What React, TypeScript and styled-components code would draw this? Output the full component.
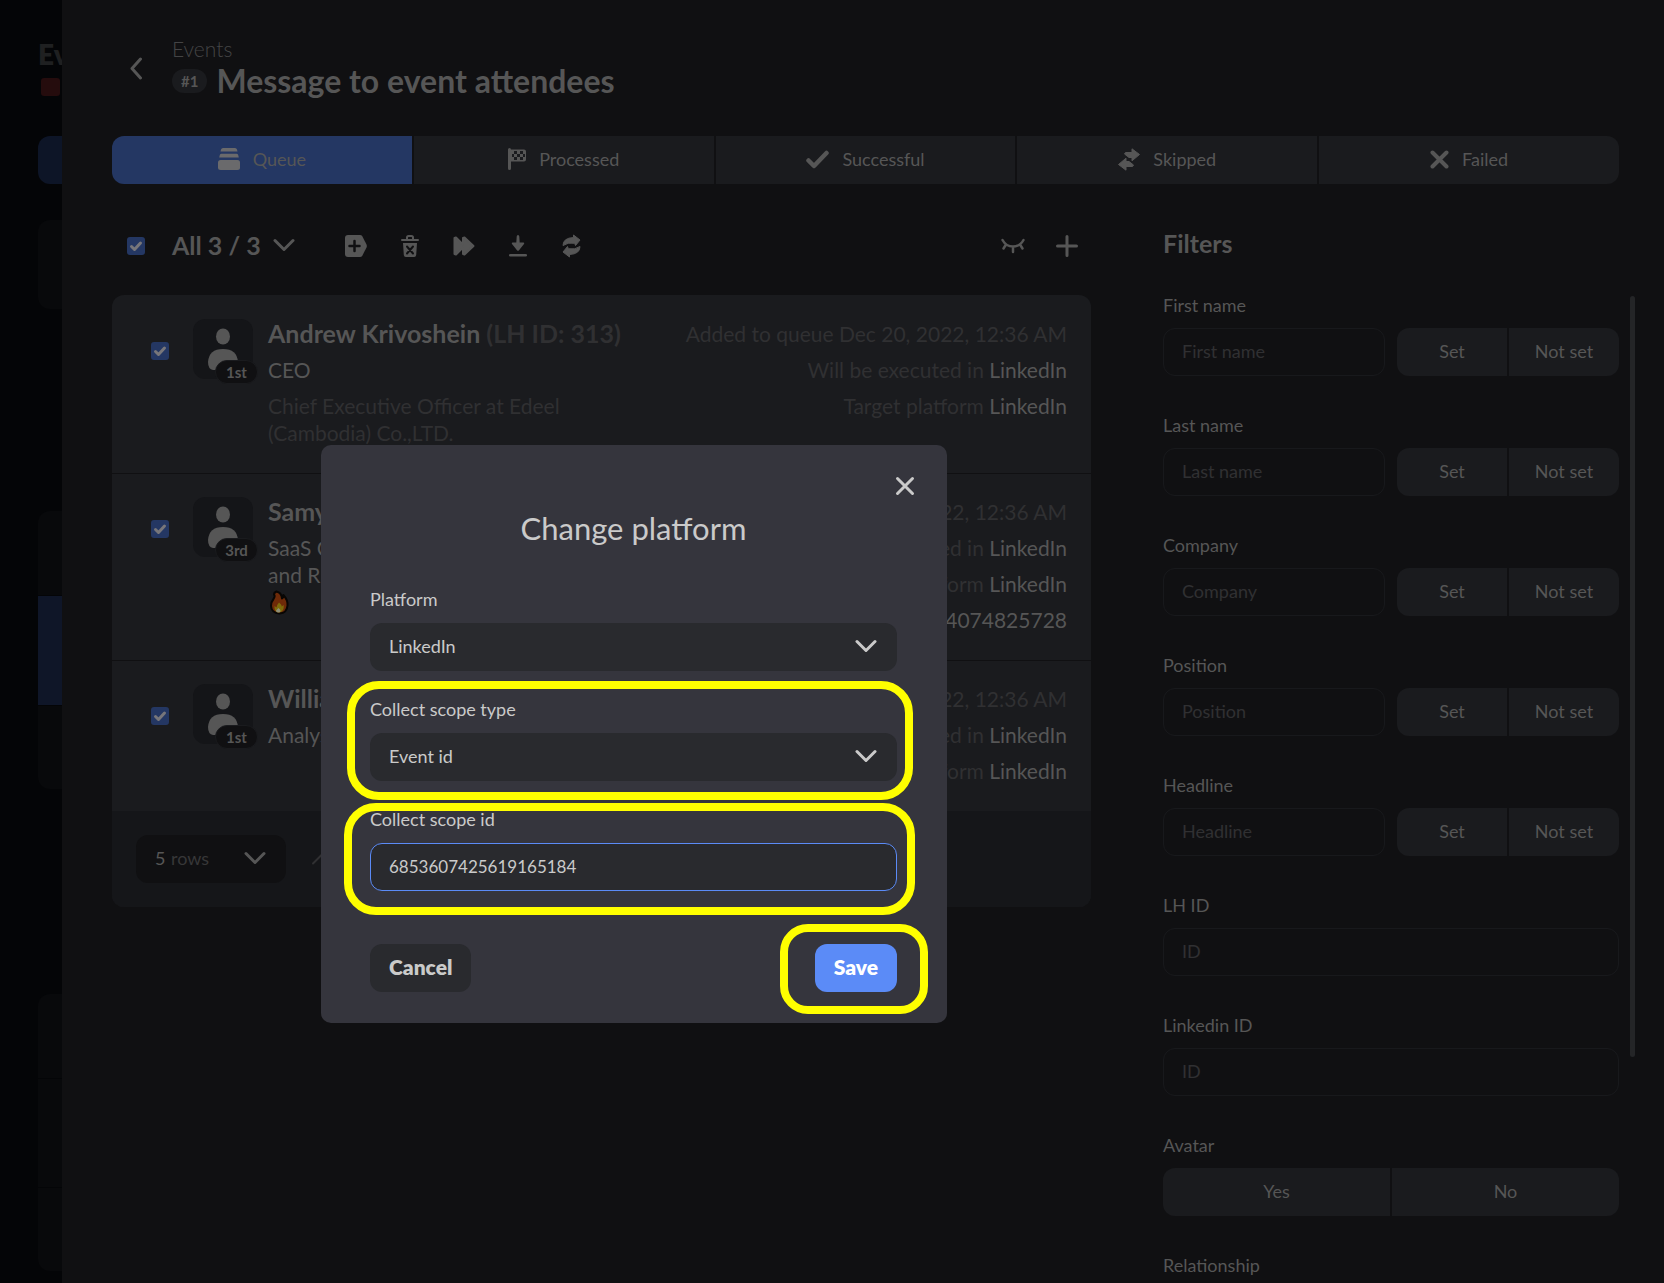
import React from "react";
import styled, { createGlobalStyle, css } from "styled-components";

const GlobalStyle = createGlobalStyle`
  *, *::before, *::after { box-sizing: border-box; }
  body { margin: 0; background: #040507; }
  body, button, input, select { font-family: Lato, "Open Sans", sans-serif; }
  h1, h2, p { margin: 0; font-weight: 400; }
  button, input, select { margin: 0; padding: 0; border: 0; background: none; color: inherit; font-size: 18px; line-height: 24px; }
`;

const c = {
  page: "#040507",
  drawer: "#101012",
  card: "#1a1b1e",
  footer: "#151619",
  text: "#565656",
  dim: "#303032",
  accentDim: "#243763",
  modal: "#35353d",
  control: "#292a2e",
  light: "#cacaca",
  accent: "#5b8bf7",
  mark: "#ffff00",
};

const Page = styled.div`
  display: grid;
  grid-template-columns: 62px minmax(0, 1fr);
  position: relative;
  min-height: 100vh;
  overflow: hidden;
  background: ${c.page};
  color: ${c.text};
`;

/* ---------- screen under the drawer ---------- */

const Backdrop = styled.aside`
  display: flex;
  flex-direction: column;
  overflow: hidden;
  padding: 38px 0 0 38px;
`;

const BackTitle = styled.div`
  font-size: 28px;
  line-height: 32px;
  font-weight: 800;
  color: #1f2021;
`;

const BackBadge = styled.div`
  width: 19px;
  height: 18px;
  margin: 8px 0 40px 3px;
  border-radius: 3px;
  background: #250c0d;
`;

const BackTab = styled.div`
  height: 48px;
  margin-bottom: 36px;
  border-radius: 12px 0 0 12px;
  background: #0d1527;
`;

const BackCard = styled.div<{ $gap: number }>`
  margin-bottom: ${(p) => p.$gap}px;
  border-radius: 12px 0 0 12px;
  overflow: hidden;
  background: #08090b;
`;

const BackRow = styled.div<{ $h: number; $active?: boolean }>`
  height: ${(p) => p.$h}px;
  background: ${(p) => (p.$active ? "#0f1628" : "transparent")};
  & + & { border-top: 1px solid ${c.page}; }
`;

/* ---------- drawer ---------- */

const Drawer = styled.main`
  padding: 35px 45px 0 50px;
  background: ${c.drawer};
`;

const Header = styled.header`
  display: flex;
  align-items: center;
  gap: 24px;
  margin-bottom: 37px;
`;

const IconButton = styled.button`
  display: grid;
  place-items: center;
  width: 24px;
  height: 24px;
`;

const BackButton = styled(IconButton)`
  margin-left: 12px;
  height: 64px;
`;

const Crumb = styled.a`
  display: block;
  font-size: 21px;
  line-height: 28px;
  font-weight: 300;
  color: #444445;
  text-decoration: none;
`;

const TitleLine = styled.div`
  display: flex;
  align-items: center;
  gap: 9px;
`;

const NumberChip = styled.span`
  padding: 0 9px;
  border-radius: 12px;
  background: ${c.card};
  font-size: 15px;
  line-height: 24px;
  font-weight: 700;
`;

const Title = styled.h1`
  font-size: 32px;
  line-height: 36px;
  font-weight: 700;
`;

const Segmented = styled.div`
  display: flex;
  gap: 2px;
  min-width: 0;
`;

const Segment = styled.button<{ $active?: boolean }>`
  display: flex;
  flex: 1 1 0;
  align-items: center;
  justify-content: center;
  gap: 13px;
  height: 48px;
  padding-bottom: 2px;
  background: ${(p) => (p.$active ? c.accentDim : c.card)};
  &:first-child { border-radius: 12px 0 0 12px; }
  &:last-child { border-radius: 0 12px 12px 0; }
`;

const Body = styled.div`
  display: grid;
  grid-template-columns: minmax(0, 1fr) 456px;
  gap: 72px;
  align-items: start;
  margin-top: 43px;
`;

const Toolbar = styled.div`
  display: flex;
  align-items: center;
  height: 38px;
  margin-bottom: 30px;
  padding: 0 12px 0 15px;
`;

const AllButton = styled.button`
  display: flex;
  align-items: center;
  gap: 12px;
  margin: 0 49px 0 27px;
  padding-bottom: 2px;
  font-size: 25px;
  line-height: 32px;
  font-weight: 700;
`;

const Actions = styled.div<{ $end?: boolean }>`
  display: flex;
  gap: 30px;
  ${(p) => p.$end && css`margin-left: auto;`}
`;

const CheckWrap = styled.span`
  display: grid;
  width: 18px;
  height: 18px;
  & > * { grid-area: 1 / 1; }
`;

const CheckBox = styled.input`
  appearance: none;
  width: 18px;
  height: 18px;
  border-radius: 3px;
  background: ${c.accentDim};
`;

const CheckMark = styled.svg`
  pointer-events: none;
`;

/* ---------- people ---------- */

const Card = styled.section`
  padding-top: 1px;
  border-radius: 12px;
  overflow: hidden;
  background: ${c.card};
`;

const PersonRow = styled.article`
  display: grid;
  grid-template-columns: 18px 60px minmax(0, 1fr) auto;
  align-items: start;
  padding: 23px 24px 27px 39px;
  & + & { border-top: 1px solid ${c.drawer}; }
`;

const RowCheck = styled.div`
  padding-top: 23px;
`;

const AvatarBox = styled.div`
  position: relative;
  display: grid;
  place-items: center;
  width: 60px;
  height: 60px;
  margin-left: 24px;
  border-radius: 12px;
  background: #141518;
`;

const Degree = styled.span`
  position: absolute;
  right: -5px;
  bottom: -5px;
  width: 43px;
  border: 1px solid ${c.card};
  border-radius: 12px;
  background: ${c.drawer};
  font-size: 15px;
  line-height: 22px;
  font-weight: 700;
  text-align: center;
`;

const Info = styled.div`
  display: grid;
  gap: 9px;
  max-width: 384px;
  padding: 1px 0 0 39px;
  font-size: 21px;
  line-height: 27px;
`;

const Name = styled.h2`
  font-size: 25px;
  line-height: 27px;
  font-weight: 700;
  white-space: nowrap;
`;

const Dim = styled.span`
  color: ${c.dim};
`;

const Meta = styled.div`
  display: grid;
  gap: 9px;
  padding-top: 1px;
  font-size: 21px;
  line-height: 27px;
  text-align: right;
`;

const CardFooter = styled.footer`
  display: flex;
  align-items: center;
  gap: 24px;
  padding: 24px;
  background: ${c.footer};
`;

const RowsField = styled.label`
  position: relative;
  width: 150px;
  border-radius: 12px;
  background: ${c.drawer};
`;

const RowsSelect = styled.select`
  appearance: none;
  display: block;
  width: 100%;
  height: 48px;
  padding: 0 0 2px 19px;
`;

const RowsUnit = styled.span`
  position: absolute;
  left: 35px;
  top: 11px;
  font-size: 18px;
  line-height: 24px;
  color: #373738;
  pointer-events: none;
`;

const SelectArrow = styled.span`
  position: absolute;
  right: 20px;
  top: 11px;
  display: grid;
  place-items: center;
  height: 24px;
  pointer-events: none;
`;

/* ---------- filters ---------- */

const Filters = styled.aside`
  position: relative;
  font-size: 18px;
  line-height: 24px;
`;

const FiltersTitle = styled.h2`
  margin-bottom: 34px;
  font-size: 25px;
  line-height: 32px;
  font-weight: 700;
`;

const FilterList = styled.div`
  display: grid;
  gap: 37px;
`;

const FilterField = styled.div`
  display: grid;
  gap: 11px;
`;

const FilterRow = styled.div`
  display: grid;
  grid-template-columns: 1fr 1fr;
  gap: 12px;
`;

const FilterInput = styled.input`
  min-width: 0;
  height: 48px;
  padding: 0 18px 2px;
  border: 1px solid #18191c;
  border-radius: 12px;
  &::placeholder { color: ${c.dim}; opacity: 1; }
`;

const ScrollThumb = styled.div`
  position: absolute;
  right: -16px;
  top: 69px;
  width: 5px;
  height: 761px;
  border-radius: 3px;
  background: #242527;
`;

/* ---------- dialog ---------- */

const Dialog = styled.div`
  position: absolute;
  left: 321px;
  top: 445px;
  width: 626px;
  padding: 29px 50px 31px 49px;
  border-radius: 10px;
  background: ${c.modal};
  color: ${c.light};
  font-size: 18px;
  line-height: 24px;
`;

const DialogTop = styled.div`
  display: flex;
  justify-content: flex-end;
  margin: 0 -20px 10px 0;
`;

const DialogTitle = styled.h2`
  margin-bottom: 39px;
  font-size: 31px;
  line-height: 40px;
  text-align: center;
`;

const DialogFields = styled.div`
  display: grid;
  gap: 26px;
  margin-bottom: 53px;
`;

const DialogField = styled.div`
  position: relative;
  display: grid;
  gap: 12px;
`;

const ControlWrap = styled.div`
  position: relative;
`;

const controlStyle = css`
  appearance: none;
  display: block;
  width: 100%;
  height: 48px;
  padding: 0 18px 2px;
  border: 1px solid transparent;
  border-radius: 12px;
  background: ${c.control};
`;

const DialogSelect = styled.select`
  ${controlStyle}
`;

const DialogInput = styled.input`
  ${controlStyle}
  border-color: ${c.accent};
  font-size: 17px;
  outline: none;
`;

const DialogActions = styled.div`
  display: flex;
  justify-content: space-between;
`;

const ActionWrap = styled.div`
  position: relative;
`;

const ActionButton = styled.button<{ $primary?: boolean }>`
  height: 48px;
  padding: 0 19px 2px;
  border-radius: 12px;
  background: ${(p) => (p.$primary ? c.accent : c.control)};
  color: ${(p) => (p.$primary ? "#ffffff" : c.light)};
  font-size: 21px;
  font-weight: 800;
`;

const Highlight = styled.span<{ $inset: string; $radius: number }>`
  position: absolute;
  inset: ${(p) => p.$inset};
  border: 8px solid ${c.mark};
  border-radius: ${(p) => p.$radius}px;
  pointer-events: none;
`;

/* ---------- icons ---------- */

const Chevron = ({ w = 22, dir = "down", stroke = 3 }: { w?: number; dir?: "down" | "up"; stroke?: number }) => (
  <svg width={w} height="14" viewBox="0 0 22 14" fill="none" stroke="currentColor" strokeWidth={stroke} strokeLinecap="round" strokeLinejoin="round">
    <path d={dir === "down" ? "M2 2.5l9 9 9-9" : "M2 11.500l9-9 9 9"} />
  </svg>
);

const BackIcon = () => (
  <svg width="14" height="26" viewBox="0 0 14 26" fill="none" stroke="currentColor" strokeWidth="3" strokeLinecap="round" strokeLinejoin="round">
    <path d="M11.500 5L3 14.500l8.500 9.500" />
  </svg>
);

const QueueIcon = () => (
  <svg width="22" height="22" viewBox="0 0 22 22" fill="#6a6a6c">
    <path d="M5 0h12q1.500 0 2 1.600l.5 1.900H2.500L3 1.600Q3.500 0 5 0zM3.500 5.700h15q1.300 0 1.700 1.300l.6 2.500H1.200L1.800 7q.4-1.300 1.700-1.300z" />
    <rect y="12" width="22" height="10" rx="2.500" />
  </svg>
);

const FlagIcon = () => (
  <svg width="18" height="22" viewBox="0 0 18 22">
    <path fill="currentColor" d="M1.500 0Q3 0 3 1.500h13q2 0 2 2v8q0 2-2 2H3v7Q3 22 1.500 22T0 20.500v-19Q0 0 1.500 0z" />
    <path fill={c.card} d="M6 3h3v3H6zM12 3h3v3h-3zM9 6h3v3H9zM15 6h2v3h-2zM4 6h2v3H4zM6 9h3v3H6zM12 9h3v3h-3z" />
  </svg>
);

const CheckIcon = () => (
  <svg width="23" height="19" viewBox="0 0 23 19" fill="none" stroke="currentColor" strokeWidth="4.500" strokeLinecap="round" strokeLinejoin="round">
    <path d="M2.500 10.500l5.500 5.500L20.500 3" />
  </svg>
);

const SkipIcon = () => (
  <svg width="22" height="23" viewBox="0 0 22 23" fill="currentColor" stroke="currentColor" strokeWidth="1" strokeLinejoin="round">
    <path d="M7.500 4.500h6.500V.8l7.500 5.700-7.500 6.300V9.500H11L6.500 6z" />
    <path d="M14.500 18.500H8v3.700L.5 16.500 8 10.200v3.300h3L15.500 17z" />
  </svg>
);

const FailIcon = () => (
  <svg width="19" height="19" viewBox="0 0 19 19" stroke="currentColor" strokeWidth="4" strokeLinecap="round">
    <path d="M2.500 2.500l14 14M16.500 2.500l-14 14" />
  </svg>
);

const TagPlusIcon = () => (
  <svg width="22" height="22" viewBox="0 0 22 22">
    <path fill="currentColor" d="M3 0h12q1.500 0 2.300 1.200l4.200 8.300q.7 1.500 0 3l-4.200 8.300Q16.500 22 15 22H3q-3 0-3-3V3q0-3 3-3z" />
    <path d="M9.500 6v10M4.500 11h10" stroke={c.drawer} strokeWidth="2.500" strokeLinecap="round" />
  </svg>
);

const TrashIcon = () => (
  <svg width="18" height="22" viewBox="0 0 18 22">
    <path fill="none" stroke="currentColor" strokeWidth="2" d="M6 4V2.500Q6 1 7.500 1h3Q12 1 12 2.500V4" />
    <path fill="currentColor" d="M1 4h16q1 0 1 1t-1 1H1Q0 6 0 5t1-1zM2 8h14l-.8 12q-.2 2-2 2H4.800q-1.800 0-2-2z" />
    <path d="M6 11.500l6 7M12 11.500l-6 7" stroke={c.drawer} strokeWidth="2" strokeLinecap="round" />
  </svg>
);

const ForwardIcon = () => (
  <svg width="22" height="20" viewBox="0 0 22 20" fill="currentColor" stroke="currentColor" strokeWidth="2" strokeLinejoin="round">
    <path d="M1.500 2l1.500-.5 7 7V2l1.500-.5L20.500 10l-9 8.500L10 18v-6.500l-7 7-1.500-.5z" />
  </svg>
);

const DownloadIcon = () => (
  <svg width="18" height="22" viewBox="0 0 18 22" fill="currentColor">
    <path d="M9 0q1.200 0 1.300 1.500L10.700 7.500h3.800q1.300.3.500 1.500l-5 6.200q-1 1-2 0L3 9q-.8-1.200.5-1.500h3.800L7.700 1.500Q7.800 0 9 0z" />
    <rect y="19" width="18" height="2.600" rx="1.300" />
  </svg>
);

const RefreshIcon = () => (
  <svg width="19" height="24" viewBox="0 0 19 24" fill="currentColor" stroke="currentColor" strokeWidth="1" strokeLinejoin="round">
    <path d="M1 11.500Q1 4 11.500 3.500V1l6.500 5-4.500 5.500-.8-2.200Q6 8 1 11.500z" />
    <path d="M18 12.500q0 7.500-10.500 8V23L1 18l4.500-5.500.8 2.200Q13 16 18 12.500z" />
  </svg>
);

const HiddenIcon = () => (
  <svg width="24" height="16" viewBox="0 0 24 16" fill="none" stroke="currentColor" strokeWidth="2.500" strokeLinecap="round">
    <path d="M1.500 2Q5 8.500 12 8.500T22.500 2M12 9v5M5 6.500l-2.500 4M19 6.500l2.500 4" />
  </svg>
);

const PlusIcon = () => (
  <svg width="22" height="22" viewBox="0 0 22 22" stroke="currentColor" strokeWidth="3" strokeLinecap="round">
    <path d="M11 1.500v19M1.500 11h19" />
  </svg>
);

const CloseIcon = () => (
  <svg width="20" height="20" viewBox="0 0 20 20" stroke="currentColor" strokeWidth="3" strokeLinecap="round">
    <path d="M2.500 2.500l15 15M17.500 2.500l-15 15" />
  </svg>
);

const PersonIcon = () => (
  <svg width="30" height="42" viewBox="0 0 30 42" fill="currentColor">
    <ellipse cx="15" cy="8.500" rx="7" ry="8" />
    <path d="M0 34Q1 21 15 21t15 13q0 7-5 8H5q-5-1-5-8z" />
  </svg>
);

const FireSvg = styled.svg`
  display: block;
  margin-top: 2px;
`;

const FireIcon = () => (
  <FireSvg width="22" height="25" viewBox="0 0 22 25" role="img" aria-label="fire">
    <path d="M8.500 1.500q5 1 5.500 7 1.500-1 1.300-3.500Q20 10 19.500 15.500 19 23 11.500 23.500 3.500 23 3 16q0-4 2.500-7Q7.500 6 6 4.500q0-2 2.500-3z" fill="#6e2a08" stroke="#080604" strokeWidth="2" strokeLinejoin="round" />
    <path d="M11 12.500q3 2.500 2.700 4l2-1.500q.8 7-4.700 7.500-5-.5-4.500-6.500l2 1.500q.5-3 2.500-5z" fill="#7d6a0a" />
    <path d="M10.500 18q2 1.500 2 3t-2.500 1.500q-2 0-2-2z" fill="#8f8f78" />
  </FireSvg>
);

/* ---------- parts ---------- */

const Check = ({ label }: { label: string }) => (
  <CheckWrap>
    <CheckBox type="checkbox" defaultChecked aria-label={label} />
    <CheckMark width="18" height="18" viewBox="0 0 18 18" fill="none" stroke="#77767a" strokeWidth="3" strokeLinecap="round" strokeLinejoin="round">
      <path d="M4.500 9.500l3 3 6-6.500" />
    </CheckMark>
  </CheckWrap>
);

const Person = ({ name, id, degree, extra, children }: {
  name: string; id?: string; degree: string; extra?: string; children: React.ReactNode;
}) => (
  <PersonRow>
    <RowCheck><Check label={`Select ${name}`} /></RowCheck>
    <AvatarBox>
      <PersonIcon />
      <Degree>{degree}</Degree>
    </AvatarBox>
    <Info>
      <Name>{name} {id && <Dim>{id}</Dim>}</Name>
      {children}
    </Info>
    <Meta>
      <p><Dim>Added to queue Dec 20, 2022, 12:36 AM</Dim></p>
      <p><Dim>Will be executed in</Dim> LinkedIn</p>
      <p><Dim>Target platform</Dim> LinkedIn</p>
      {extra && <p>{extra}</p>}
    </Meta>
  </PersonRow>
);

const tabs = [
  { text: "Queue", icon: <QueueIcon /> },
  { text: "Processed", icon: <FlagIcon /> },
  { text: "Successful", icon: <CheckIcon /> },
  { text: "Skipped", icon: <SkipIcon /> },
  { text: "Failed", icon: <FailIcon /> },
];

const textFilters = ["First name", "Last name", "Company", "Position", "Headline"];
const idFilters = ["LH ID", "Linkedin ID"];

export default function App() {
  return (
    <Page>
      <GlobalStyle />
      <Backdrop>
        <BackTitle>Ev</BackTitle>
        <BackBadge />
        <BackTab />
        <BackCard $gap={202}><BackRow $h={89} /></BackCard>
        <BackCard $gap={205}>
          <BackRow $h={84} />
          <BackRow $h={110} $active />
          <BackRow $h={84} />
        </BackCard>
        <BackCard $gap={0}>
          <BackRow $h={84} />
          <BackRow $h={109} />
          <BackRow $h={84} />
        </BackCard>
      </Backdrop>

      <Drawer>
        <Header>
          <BackButton type="button" aria-label="Back"><BackIcon /></BackButton>
          <div>
            <Crumb href="#events">Events</Crumb>
            <TitleLine>
              <NumberChip>#1</NumberChip>
              <Title>Message to event attendees</Title>
            </TitleLine>
          </div>
        </Header>

        <Segmented>
          {tabs.map((t, i) => (
            <Segment key={t.text} type="button" $active={i === 0}>{t.icon}{t.text}</Segment>
          ))}
        </Segmented>

        <Body>
          <div>
            <Toolbar>
              <Check label="Select all" />
              <AllButton type="button">All 3 / 3 <Chevron stroke={3} /></AllButton>
              <Actions>
                <IconButton type="button" aria-label="Add tag"><TagPlusIcon /></IconButton>
                <IconButton type="button" aria-label="Delete"><TrashIcon /></IconButton>
                <IconButton type="button" aria-label="Skip"><ForwardIcon /></IconButton>
                <IconButton type="button" aria-label="Download"><DownloadIcon /></IconButton>
                <IconButton type="button" aria-label="Refresh"><RefreshIcon /></IconButton>
              </Actions>
              <Actions $end>
                <IconButton type="button" aria-label="Hide"><HiddenIcon /></IconButton>
                <IconButton type="button" aria-label="Add"><PlusIcon /></IconButton>
              </Actions>
            </Toolbar>

            <Card>
              <Person name="Andrew Krivoshein" id="(LH ID: 313)" degree="1st">
                <p>CEO</p>
                <p><Dim>Chief Executive Officer at Edeel (Cambodia) Co.,LTD.</Dim></p>
              </Person>
              <Person name="Samy" degree="3rd" extra="64074825728">
                <p>SaaS C<br />and R<FireIcon /></p>
              </Person>
              <Person name="William" degree="1st">
                <p>Analyst</p>
              </Person>
              <CardFooter>
                <RowsField>
                  <RowsSelect aria-label="Rows per page" defaultValue="5">
                    <option>5</option>
                  </RowsSelect>
                  <RowsUnit>rows</RowsUnit>
                  <SelectArrow><Chevron /></SelectArrow>
                </RowsField>
                <IconButton type="button" aria-label="Previous page" disabled><Dim><Chevron dir="up" stroke={2} /></Dim></IconButton>
              </CardFooter>
            </Card>
          </div>

          <Filters>
            <FiltersTitle>Filters</FiltersTitle>
            <FilterList>
              {textFilters.map((f) => (
                <FilterField key={f}>
                  <label htmlFor={f}>{f}</label>
                  <FilterRow>
                    <FilterInput id={f} placeholder={f} />
                    <Segmented>
                      <Segment type="button">Set</Segment>
                      <Segment type="button">Not set</Segment>
                    </Segmented>
                  </FilterRow>
                </FilterField>
              ))}
              {idFilters.map((f) => (
                <FilterField key={f}>
                  <label htmlFor={f}>{f}</label>
                  <FilterInput id={f} placeholder="ID" />
                </FilterField>
              ))}
              <FilterField>
                <span>Avatar</span>
                <Segmented>
                  <Segment type="button">Yes</Segment>
                  <Segment type="button">No</Segment>
                </Segmented>
              </FilterField>
              <span>Relationship</span>
            </FilterList>
            <ScrollThumb />
          </Filters>
        </Body>
      </Drawer>

      <Dialog role="dialog" aria-labelledby="dialog-title">
        <DialogTop>
          <IconButton type="button" aria-label="Close"><CloseIcon /></IconButton>
        </DialogTop>
        <DialogTitle id="dialog-title">Change platform</DialogTitle>
        <DialogFields>
          <DialogField>
            <label htmlFor="platform">Platform</label>
            <ControlWrap>
              <DialogSelect id="platform"><option>LinkedIn</option></DialogSelect>
              <SelectArrow><Chevron /></SelectArrow>
            </ControlWrap>
          </DialogField>
          <DialogField>
            <label htmlFor="scope-type">Collect scope type</label>
            <ControlWrap>
              <DialogSelect id="scope-type"><option>Event id</option></DialogSelect>
              <SelectArrow><Chevron /></SelectArrow>
            </ControlWrap>
            <Highlight $inset="-16px -16px -19px -23px" $radius={32} />
          </DialogField>
          <DialogField>
            <label htmlFor="scope-id">Collect scope id</label>
            <DialogInput id="scope-id" defaultValue="6853607425619165184" />
            <Highlight $inset="-4px -18px -24px -26px" $radius={32} />
          </DialogField>
        </DialogFields>
        <DialogActions>
          <ActionButton type="button">Cancel</ActionButton>
          <ActionWrap>
            <ActionButton type="button" $primary>Save</ActionButton>
            <Highlight $inset="-20px -31px -22px -35px" $radius={28} />
          </ActionWrap>
        </DialogActions>
      </Dialog>
    </Page>
  );
}
